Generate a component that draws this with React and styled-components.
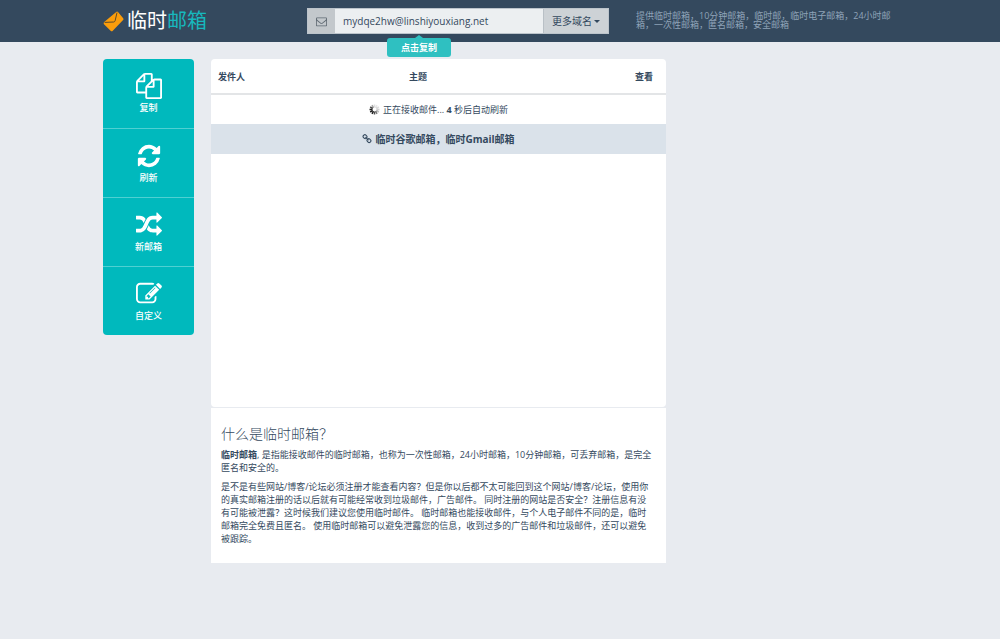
import React from 'react';
import styled, { createGlobalStyle } from 'styled-components';

const ICONS = {
  files: 'M1696 384q40 0 68 28t28 68v1216q0 40-28 68t-68 28h-960q-40 0-68-28t-28-68v-288h-544q-40 0-68-28t-28-68v-672q0-40 20-88t48-76l408-408q28-28 76-48t88-20h416q40 0 68 28t28 68v328q68-40 128-40h416zm-544 213l-299 299h299v-299zm-640-384l-299 299h299v-299zm196 647l316-316v-416h-384v416q0 40-28 68t-68 28h-416v640h512v-256q0-40 20-88t48-76zm956 804v-1152h-384v416q0 40-28 68t-68 28h-416v640h896z',
  refresh: 'M1639 1056q0 5-1 7-64 268-268 434.5t-478 166.5q-146 0-282.5-55t-243.5-157l-129 129q-19 19-45 19t-45-19-19-45v-448q0-26 19-45t45-19h448q26 0 45 19t19 45-19 45l-137 137q71 66 161 102t187 36q134 0 250-65t186-179q11-17 53-117 8-23 30-23h192q13 0 22.5 9.5t9.5 22.5zm25-800v448q0 26-19 45t-45 19h-448q-26 0-45-19t-19-45 19-45l138-138q-148-137-349-137-134 0-250 65t-186 179q-11 17-53 117-8 23-30 23h-199q-13 0-22.5-9.5t-9.5-22.5v-7q65-268 270-434.5t480-166.5q146 0 284 55.5t245 156.5l130-129q19-19 45-19t45 19 19 45z',
  random: 'M666 481q-60 92-137 273-22-45-37-72.5t-40.5-63.5-51-56.5-63-35-81.5-14.5h-224q-14 0-23-9t-9-23v-192q0-14 9-23t23-9h224q250 0 410 225zm1126 799q0 14-9 23l-320 320q-9 9-23 9-13 0-22.5-9.5t-9.5-22.5v-192q-32 0-85 .5t-81 1-73-1-71-5-64-10.5-63-18.5-58-28.5-59-40-55-53.5-56-69.5q59-93 136-273 22 45 37 72.5t40.5 63.5 51 56.5 63 35 81.5 14.5h256v-192q0-14 9-23t23-9q12 0 24 10l319 319q9 9 9 23zm0-896q0 14-9 23l-320 320q-9 9-23 9-13 0-22.5-9.5t-9.5-22.5v-192h-256q-48 0-87 15t-69 45-51 61.5-45 77.5q-32 62-78 171-29 66-49.5 111t-54 105-64 100-74 83-90 68.5-106.5 42-128 16.5h-224q-14 0-23-9t-9-23v-192q0-14 9-23t23-9h224q48 0 87-15t69-45 51-61.5 45-77.5q32-62 78-171 29-66 49.5-111t54-105 64-100 74-83 90-68.5 106.5-42 128-16.5h256v-192q0-14 9-23t23-9q12 0 24 10l319 319q9 9 9 23z',
  edit: 'M888 1184l116-116-152-152-116 116v56h96v96h56zm440-720q-16-16-33 1l-350 350q-17 17-1 33t33-1l350-350q17-17 1-33zm80 594v190q0 119-84.5 203.5t-203.5 84.5h-832q-119 0-203.5-84.5t-84.5-203.5v-832q0-119 84.5-203.5t203.5-84.5h832q63 0 117 25 15 7 18 23 3 17-9 29l-49 49q-14 14-32 8-23-6-45-6h-832q-66 0-113 47t-47 113v832q0 66 47 113t113 47h832q66 0 113-47t47-113v-126q0-13 9-22l64-64q15-15 35-7t20 29zm-96-738l288 288-672 672h-288v-288zm444 132l-92 92-288-288 92-92q28-28 68-28t68 28l152 152q28 28 28 68t-28 68z',
  envelope: 'M1664 1504v-768q-32 36-69 66-268 206-426 338-51 43-83 67t-86.5 48.5-102.5 24.5h-2q-48 0-102.5-24.5t-86.5-48.5-83-67q-158-132-426-338-37-30-69-66v768q0 13 9.5 22.5t22.5 9.5h1472q13 0 22.5-9.5t9.5-22.5zm0-1051v-24.5l-.5-13-3-12.5-5.5-9-9-7.5-14-2.5h-1472q-13 0-22.5 9.5t-9.5 22.5q0 168 147 284 193 152 401 317 6 5 35 29.5t46 37.5 44.5 31.5 50.5 27.5 43 9h2q20 0 43-9t50.5-27.5 44.5-31.5 46-37.5 35-29.5q208-165 401-317 54-43 100.5-115.5t46.5-131.5zm128-37v1088q0 66-47 113t-113 47h-1472q-66 0-113-47t-47-113v-1088q0-66 47-113t113-47h1472q66 0 113 47t47 113z',
  link: 'M1520 1216q0-40-28-68l-208-208q-28-28-68-28-42 0-72 32 3 3 19 18.5t21.5 21.5 15 19 13 25.5 3.5 27.5q0 40-28 68t-68 28q-15 0-27.5-3.5t-25.5-13-19-15-21.5-21.5-18.5-19q-33 31-33 73 0 40 28 68l206 207q27 27 68 27 40 0 68-26l147-146q28-28 28-67zm-703-705q0-40-28-68l-206-207q-28-28-68-28-39 0-68 27l-147 146q-28 28-28 67 0 40 28 68l208 208q27 27 68 27 42 0 72-31-3-3-19-18.5t-21.5-21.5-15-19-13-25.5-3.5-27.5q0-40 28-68t68-28q15 0 27.5 3.5t25.5 13 19 15 21.5 21.5 18.5 19q33-31 33-73zm895 705q0 120-85 203l-147 146q-83 83-203 83-121 0-204-85l-206-207q-83-83-83-203 0-123 88-209l-88-88q-86 88-208 88-120 0-204-84l-208-208q-84-84-84-204t85-203l147-146q83-83 203-83 121 0 204 85l206 207q83 83 83 203 0 123-88 209l88 88q86-88 208-88 120 0 204 84l208 208q84 84 84 204z',
};

const ACTIONS = [
  { icon: 'files', label: '复制' },
  { icon: 'refresh', label: '刷新' },
  { icon: 'random', label: '新邮箱' },
  { icon: 'edit', label: '自定义' },
];

const SPOKES = [0.15, 0.1, 0.15, 0.2, 0.3, 0.6, 0.8, 1, 1, 1, 0.8, 0.4];

function Icon({ name, size }) {
  return (
    <svg width={size} height={size} viewBox="0 0 1792 1792" fill="currentColor" aria-hidden="true">
      <path d={ICONS[name]} />
    </svg>
  );
}

function LogoMark() {
  return (
    <svg width="21" height="21" viewBox="0 0 21 21" aria-hidden="true">
      <path d="M13.2 .9Q14.2 .1 15 1.1L20.2 7.2Q21 8.2 20.1 9.1L9.8 19.8Q8.7 20.9 7.6 19.8L1 13.2Q0 12.1 1.2 11.1Z" fill="#fb9d0b" />
      <path d="M1.6 11.4L10.6 11Q11.8 10.9 12.1 9.8L14 1.6" fill="none" stroke="#5b4a2c" strokeWidth="1" />
    </svg>
  );
}

function Spinner() {
  return (
    <svg width="11" height="11" viewBox="0 0 22 22" aria-hidden="true">
      {SPOKES.map((opacity, i) => (
        <path key={i} d="M11 1v6" stroke="#222" strokeWidth="3" opacity={opacity} transform={`rotate(${i * 30} 11 11)`} />
      ))}
    </svg>
  );
}

export default function App() {
  return (
    <>
      <GlobalStyle />
      <Header>
        <HeaderInner>
          <Logo href="#">
            <LogoMark />
            <span>临时<em>邮箱</em></span>
          </Logo>
          <MailGroup>
            <Addon htmlFor="mail" aria-label="邮箱">
              <Icon name="envelope" size={11} />
            </Addon>
            <MailInput id="mail" type="text" readOnly value="mydqe2hw@linshiyouxiang.net" />
            <DomainButton type="button">
              更多域名 <Caret />
            </DomainButton>
            <Tooltip role="tooltip">点击复制</Tooltip>
          </MailGroup>
          <Tagline>
            提供临时邮箱，10分钟邮箱，临时邮，临时电子邮箱，24小时邮箱，一次性邮箱，匿名邮箱，安全邮箱
          </Tagline>
        </HeaderInner>
      </Header>

      <Page>
        <Actions>
          {ACTIONS.map(({ icon, label }) => (
            <ActionButton type="button" key={icon}>
              <Icon name={icon} size={26} />
              {label}
            </ActionButton>
          ))}
        </Actions>
        <Main>
          <Inbox>
            <MailTable>
              <thead>
                <tr>
                  <Th $width="42%">发件人</Th>
                  <Th>主题</Th>
                  <Th $align="right">查看</Th>
                </tr>
              </thead>
              <tbody>
                <tr>
                  <Td colSpan="3">
                    <Line>
                      <Spinner />
                      <span>正在接收邮件... <b>4</b> 秒后自动刷新</span>
                    </Line>
                  </Td>
                </tr>
                <tr>
                  <Td colSpan="3" $active>
                    <PromoLink href="#">
                      <Icon name="link" size={10} />
                      临时谷歌邮箱，临时Gmail邮箱
                    </PromoLink>
                  </Td>
                </tr>
              </tbody>
            </MailTable>
          </Inbox>
          <About>
            <h1>什么是临时邮箱？</h1>
            <p>
              <b>临时邮箱</b>, 是指能接收邮件的临时邮箱，也称为一次性邮箱，24小时邮箱，10分钟邮箱，可丢弃邮箱，是完全匿名和安全的。
            </p>
            <p>
              是不是有些网站/博客/论坛必须注册才能查看内容？但是你以后都不太可能回到这个网站/博客/论坛，使用你的真实邮箱注册的话以后就有可能经常收到垃圾邮件，广告邮件。 同时注册的网站是否安全？注册信息有没有可能被泄露？这时候我们建议您使用临时邮件。 临时邮箱也能接收邮件，与个人电子邮件不同的是，临时邮箱完全免费且匿名。 使用临时邮箱可以避免泄露您的信息，收到过多的广告邮件和垃圾邮件，还可以避免被跟踪。
            </p>
          </About>
        </Main>
      </Page>
    </>
  );
}

const GlobalStyle = createGlobalStyle`
  * {
    box-sizing: border-box;
  }
  body {
    margin: 0;
    background: #e8ebf0;
    color: #34495e;
    font-family: "Open Sans", "Noto Sans CJK SC", sans-serif;
    font-size: 9px;
    line-height: 13px;
  }
  button, input {
    font: inherit;
    color: inherit;
  }
  svg {
    flex: none;
  }
`;

const Header = styled.header`
  background: #34495e;
  padding: 8px 16px;
`;

const HeaderInner = styled.div`
  max-width: 794px;
  margin: 0 auto;
  display: grid;
  grid-template-columns: 177px 302px 1fr;
  column-gap: 27px;
`;

const Logo = styled.a`
  display: flex;
  align-items: center;
  gap: 3px;
  color: #fff;
  font-size: 20px;
  line-height: 26px;
  text-decoration: none;

  em {
    color: #17b8bd;
    font-style: normal;
  }
`;

const MailGroup = styled.div`
  position: relative;
  display: flex;
  height: 26px;
  border: 1px solid #bcc4cb;
`;

const Addon = styled.label`
  width: 27px;
  display: flex;
  align-items: center;
  justify-content: center;
  background: #c3c8cc;
  color: #5d6770;
`;

const MailInput = styled.input`
  flex: 1;
  min-width: 0;
  border: 0;
  padding: 0 8px;
  background: #eceff1;
  font-size: 10px;
`;

const DomainButton = styled.button`
  display: flex;
  align-items: center;
  gap: 2px;
  border: 0;
  border-left: 1px solid #b9c0c6;
  padding: 0 8px;
  background: #cdd2d6;
  font-size: 10px;
`;

const Caret = styled.span`
  border: 3px solid transparent;
  border-top-color: currentColor;
  border-bottom: 0;
`;

const Tooltip = styled.div`
  position: absolute;
  top: 29px;
  left: 79px;
  width: 64px;
  border-radius: 3px;
  background: #2fc0c1;
  color: #fff;
  font-weight: 700;
  line-height: 19px;
  text-align: center;

  &::before {
    content: '';
    position: absolute;
    bottom: 100%;
    left: 50%;
    margin-left: -4px;
    border: 4px solid transparent;
    border-top: 0;
    border-bottom: 3px solid #2fc0c1;
  }
`;

const Tagline = styled.p`
  margin: 3px 0 0;
  color: #8fa3b8;
  line-height: 9px;
`;

const Page = styled.div`
  max-width: 794px;
  margin: 17px auto;
  display: grid;
  grid-template-columns: 91px minmax(0, 455px) 1fr;
  column-gap: 17px;
  align-items: start;
`;

const Actions = styled.nav`
  display: flex;
  flex-direction: column;
  border-radius: 4px;
  overflow: hidden;
`;

const ActionButton = styled.button`
  height: 69px;
  display: flex;
  flex-direction: column;
  align-items: center;
  justify-content: center;
  gap: 2px;
  border: 0;
  padding: 0;
  background: #00b9bd;
  color: #fff;
  font-weight: 500;
  cursor: pointer;

  & + & {
    border-top: 1px solid #4fd0d2;
  }
`;

const Main = styled.main`
  display: flex;
  flex-direction: column;
  gap: 1px;
`;

const Inbox = styled.section`
  min-height: 348px;
  border-radius: 4px;
  background: #fff;
`;

const MailTable = styled.table`
  width: 100%;
  border-collapse: collapse;
`;

const Th = styled.th`
  width: ${(props) => props.$width || 'auto'};
  height: 35px;
  padding: 0 13px 0 7px;
  border-bottom: 2px solid #e3e5e7;
  text-align: ${(props) => props.$align || 'left'};
`;

const Td = styled.td`
  height: 30px;
  padding: 0;
  background: ${(props) => (props.$active ? '#dae2ea' : 'none')};
`;

const Line = styled.div`
  display: flex;
  align-items: center;
  justify-content: center;
  gap: 3px;
`;

const PromoLink = styled.a`
  display: flex;
  align-items: center;
  justify-content: center;
  gap: 3px;
  color: inherit;
  font-size: 10px;
  font-weight: 700;
  text-decoration: none;
`;

const About = styled.section`
  padding: 17px 13px 12px 10px;
  background: #fff;

  h1 {
    margin: 0 0 5px;
    font-size: 14px;
    font-weight: 300;
    line-height: 18px;
  }

  p {
    margin: 0 0 6px;
  }
`;
